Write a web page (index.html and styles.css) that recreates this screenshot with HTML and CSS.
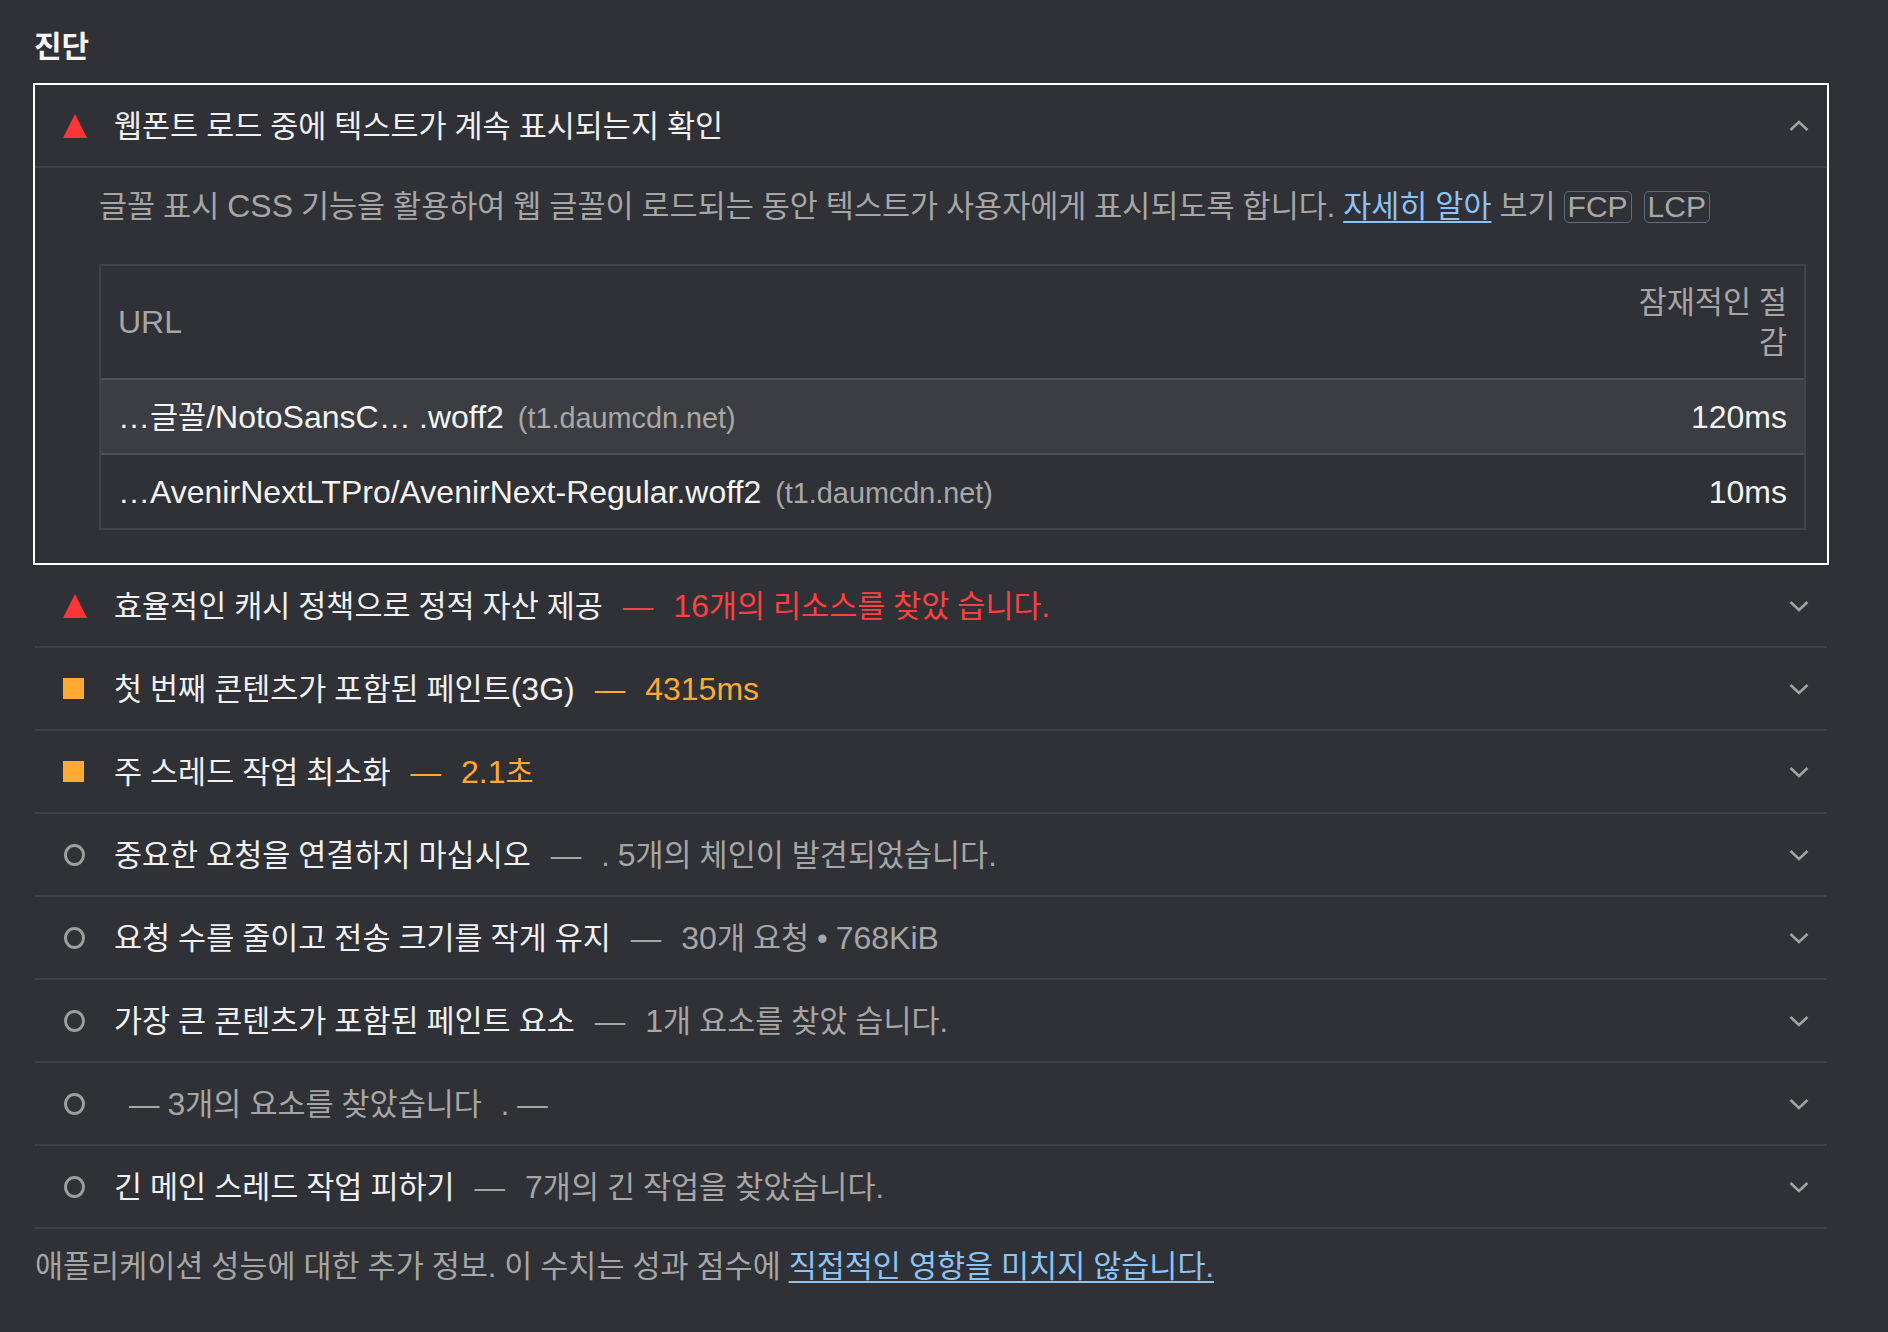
FILE: index.html
```html
<!DOCTYPE html>
<html lang="ko">
<head>
<meta charset="utf-8">
<title>진단</title>
<link rel="stylesheet" href="styles.css">
</head>
<body>
<main class="page">
  <h2 class="group-title">진단</h2>

  <div class="audits">
    <div class="audit open">
      <div class="summary">
        <span class="icon"><svg class="tri" viewBox="0 0 24 24" width="24" height="24"><polygon points="12,0 24,24 0,24"/></svg></span>
        <span class="label"><span class="title">웹폰트 로드 중에 텍스트가 계속 표시되는지 확인</span></span>
        <svg class="chev" viewBox="0 0 20 12" width="20" height="12"><polyline points="1.5,10 10,2 18.5,10"/></svg>
      </div>
      <div class="details">
        <p class="desc">글꼴 표시 <span class="en">CSS</span> 기능을 활용하여 웹 글꼴이 로드되는 동안 텍스트가 사용자에게 표시되도록 합니다. <a class="link" href="#">자세히 알아</a> 보기 <span class="badge">FCP</span><span class="badge">LCP</span></p>
        <table class="tbl">
          <thead>
            <tr>
              <th class="col-url"><span class="en">URL</span></th>
              <th class="col-num">잠재적인 절감</th>
            </tr>
          </thead>
          <tbody>
            <tr class="odd">
              <td class="col-url">…<span class="ko">글꼴</span>/NotoSansC… .woff2<span class="host">(t1.daumcdn.net)</span></td>
              <td class="col-num">120ms</td>
            </tr>
            <tr>
              <td class="col-url">…AvenirNextLTPro/AvenirNext-Regular.woff2<span class="host">(t1.daumcdn.net)</span></td>
              <td class="col-num">10ms</td>
            </tr>
          </tbody>
        </table>
      </div>
    </div>

    <div class="audit">
      <div class="summary">
        <span class="icon"><svg class="tri" viewBox="0 0 24 24" width="24" height="24"><polygon points="12,0 24,24 0,24"/></svg></span>
        <span class="label"><span class="title">효율적인 캐시 정책으로 정적 자산 제공</span><span class="value fail"><span class="en">16</span>개의 리소스를 찾았 습니다.</span></span>
        <svg class="chev" viewBox="0 0 20 12" width="20" height="12"><polyline points="1.5,2 10,10 18.5,2"/></svg>
      </div>
    </div>

    <div class="audit">
      <div class="summary">
        <span class="icon"><span class="sq"></span></span>
        <span class="label"><span class="title">첫 번째 콘텐츠가 포함된 페인트<span class="en">(3G)</span></span><span class="value avg"><span class="en">4315ms</span></span></span>
        <svg class="chev" viewBox="0 0 20 12" width="20" height="12"><polyline points="1.5,2 10,10 18.5,2"/></svg>
      </div>
    </div>

    <div class="audit">
      <div class="summary">
        <span class="icon"><span class="sq"></span></span>
        <span class="label"><span class="title">주 스레드 작업 최소화</span><span class="value avg"><span class="en">2.1</span>초</span></span>
        <svg class="chev" viewBox="0 0 20 12" width="20" height="12"><polyline points="1.5,2 10,10 18.5,2"/></svg>
      </div>
    </div>

    <div class="audit">
      <div class="summary">
        <span class="icon"><span class="ring"></span></span>
        <span class="label"><span class="title">중요한 요청을 연결하지 마십시오</span><span class="value info">. <span class="en">5</span>개의 체인이 발견되었습니다.</span></span>
        <svg class="chev" viewBox="0 0 20 12" width="20" height="12"><polyline points="1.5,2 10,10 18.5,2"/></svg>
      </div>
    </div>

    <div class="audit">
      <div class="summary">
        <span class="icon"><span class="ring"></span></span>
        <span class="label"><span class="title">요청 수를 줄이고 전송 크기를 작게 유지</span><span class="value info"><span class="en">30</span>개 요청 • <span class="en">768KiB</span></span></span>
        <svg class="chev" viewBox="0 0 20 12" width="20" height="12"><polyline points="1.5,2 10,10 18.5,2"/></svg>
      </div>
    </div>

    <div class="audit">
      <div class="summary">
        <span class="icon"><span class="ring"></span></span>
        <span class="label"><span class="title">가장 큰 콘텐츠가 포함된 페인트 요소</span><span class="value info"><span class="en">1</span>개 요소를 찾았 습니다.</span></span>
        <svg class="chev" viewBox="0 0 20 12" width="20" height="12"><polyline points="1.5,2 10,10 18.5,2"/></svg>
      </div>
    </div>

    <div class="audit">
      <div class="summary">
        <span class="icon"><span class="ring"></span></span>
        <span class="label"><span class="title"></span><span class="value info bare"><span class="en">3</span>개의 요소를 찾았습니다<span class="trail">. —</span></span></span>
        <svg class="chev" viewBox="0 0 20 12" width="20" height="12"><polyline points="1.5,2 10,10 18.5,2"/></svg>
      </div>
    </div>

    <div class="audit">
      <div class="summary">
        <span class="icon"><span class="ring"></span></span>
        <span class="label"><span class="title">긴 메인 스레드 작업 피하기</span><span class="value info"><span class="en">7</span>개의 긴 작업을 찾았습니다.</span></span>
        <svg class="chev" viewBox="0 0 20 12" width="20" height="12"><polyline points="1.5,2 10,10 18.5,2"/></svg>
      </div>
    </div>
  </div>

  <p class="footer">애플리케이션 성능에 대한 추가 정보. 이 수치는 성과 점수에 <a class="link" href="#">직접적인 영향을 미치지 않습니다.</a></p>
</main>
</body>
</html>
```

FILE: styles.css
```css
* {
  box-sizing: border-box;
}

html,
body {
  margin: 0;
}

body {
  background: #303136;
  color: #f1f1f1;
  font-family: "Liberation Sans", "Noto Sans CJK KR", sans-serif;
  font-size: 30.5px;
  line-height: 40px;
  word-spacing: -0.5px;
}

.page {
  padding: 26px 59px 0 33px;
}

.group-title {
  margin: 0 0 15px 1px;
  font-size: 30px;
  font-weight: 700;
  line-height: 42px;
  color: #f4f4f4;
}

.en {
  font-size: 32px;
  line-height: 1;
}

.ko {
  font-size: 30.5px;
  line-height: 1;
}

/* audits */
.audit {
  margin: 0 2px;
  border-bottom: 2px solid #404146;
}

.audit.open {
  margin: 0;
  border: 2px solid #ffffff;
}

.summary {
  display: flex;
  align-items: center;
  height: 81px;
  padding: 0 18px 0 28px;
}

.audit.open .summary {
  border-bottom: 2px solid #404146;
  height: 83px;
}

.icon {
  flex: none;
  width: 24px;
  height: 24px;
  margin-right: 27px;
  display: flex;
  align-items: center;
}

.tri {
  display: block;
  fill: #ff3434;
}

.sq {
  display: block;
  width: 21px;
  height: 21px;
  background: #ffaa33;
}

.ring {
  display: block;
  width: 21px;
  height: 22px;
  margin-left: 1px;
  border: 3px solid #9e9e9e;
  border-radius: 50%;
}

.label {
  flex: 1;
  white-space: nowrap;
  line-height: 40px;
}

.title {
  color: #f1f1f1;
}

.value {
  margin-left: 20px;
}

.value::before {
  content: "—";
  margin-right: 20px;
}

.value.bare {
  margin-left: 15px;
}

.value.bare::before {
  margin-right: 8px;
}

.trail {
  margin-left: 19px;
}

.fail {
  color: #ff4040;
}

.avg {
  color: #ffaa33;
}

.info {
  color: #a6a6a6;
}

.chev {
  flex: none;
  display: block;
  fill: none;
  stroke: #a2a2a2;
  stroke-width: 2.6;
}

/* details */
.details {
  padding: 18px 21px 33px 64px;
}

.desc {
  height: 40px;
  margin: 0 0 38px;
  color: #a6a6a6;
  line-height: 40px;
  white-space: nowrap;
}

.link {
  color: #8cc4f6;
  text-decoration: underline;
  text-decoration-thickness: 2px;
  text-underline-offset: 4px;
}

.badge {
  display: inline-block;
  padding: 0 3px;
  border: 1.5px solid #5b6d80;
  border-radius: 5px;
  font-size: 30px;
  line-height: 30px;
  color: #a8a8a8;
}

.badge + .badge {
  margin-left: 12px;
}

/* table */
.tbl {
  width: 100%;
  border-collapse: separate;
  border-spacing: 0;
  border: 2px solid #424348;
}

.tbl th {
  height: 112px;
  padding: 16px 17px;
  font-weight: 400;
  color: #a6a6a6;
  line-height: 40px;
  vertical-align: middle;
}

.tbl td {
  height: 75px;
  padding: 0 17px;
  border-top: 2px solid #505157;
  font-size: 32px;
  line-height: 40px;
  color: #f4f4f4;
  white-space: nowrap;
  vertical-align: middle;
}

.tbl tr.odd td {
  background: #3c3d42;
}

.col-url {
  text-align: left;
}

.col-num {
  text-align: right;
}

.tbl th.col-num {
  width: 194px;
}

.host {
  margin-left: 14px;
  font-size: 28.8px;
  line-height: 1;
  color: #a8a8a8;
}

.footer {
  margin: 17px 0 0 2px;
  color: #a6a6a6;
  line-height: 40px;
}
```
